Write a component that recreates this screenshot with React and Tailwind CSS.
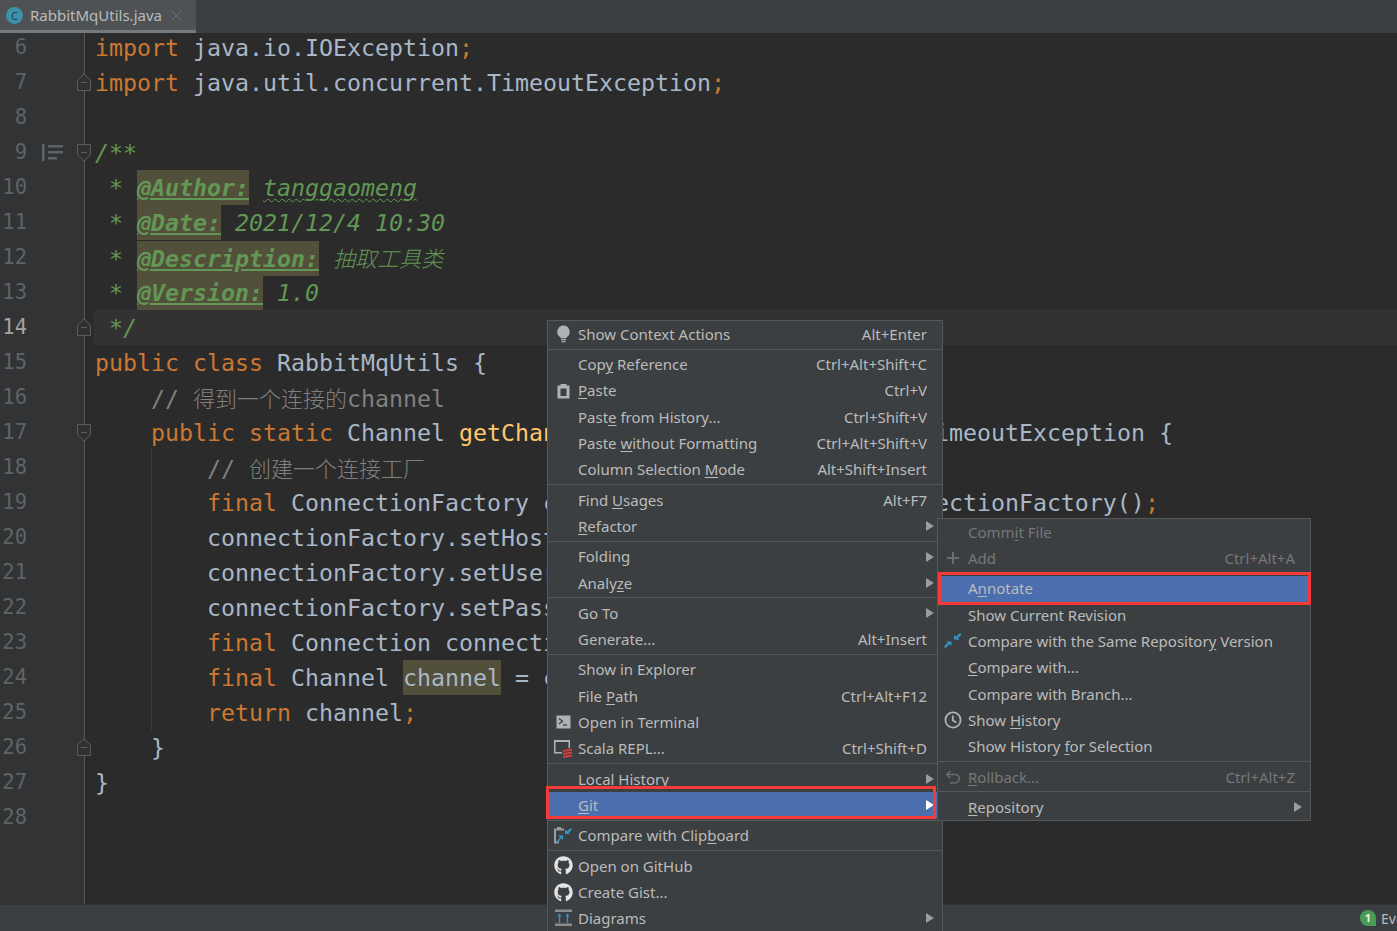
import { FaGithub } from 'react-icons/fa';

const Kw = ({ children }) => <span className="text-[#cc7832]">{children}</span>;
const Doc = ({ children }) => <span className="text-[#629755] italic">{children}</span>;
const Line = ({ children }) => <span className="text-[#808080]">{children}</span>;
const Cjk = ({ children }) => <span className="text-[22px] font-['Noto_Sans_CJK_SC'] font-light">{children}</span>;
const Tag = ({ children }) => (
  <span className="inline-block h-[35px] bg-[#52503a] font-bold text-[#629755] italic underline underline-offset-2">{children}</span>
);

const codeLines = [
  { n: 6, code: <><Kw>import</Kw> java.io.IOException<Kw>;</Kw></> },
  { n: 7, fold: 'up', code: <><Kw>import</Kw> java.util.concurrent.TimeoutException<Kw>;</Kw></> },
  { n: 8, code: '' },
  { n: 9, fold: 'down', mark: true, code: <Doc>/**</Doc> },
  { n: 10, code: <><Doc> * </Doc><Tag>@Author:</Tag><Doc> </Doc><span className="text-[#629755] italic underline decoration-wavy decoration-1 underline-offset-2">tanggaomeng</span></> },
  { n: 11, code: <><Doc> * </Doc><Tag>@Date:</Tag><Doc> 2021/12/4 10:30</Doc></> },
  { n: 12, code: <><Doc> * </Doc><Tag>@Description:</Tag><Doc> <Cjk>抽取工具类</Cjk></Doc></> },
  { n: 13, code: <><Doc> * </Doc><Tag>@Version:</Tag><Doc> 1.0</Doc></> },
  { n: 14, fold: 'up', current: true, code: <Doc> */</Doc> },
  { n: 15, code: <><Kw>public class</Kw> RabbitMqUtils {'{'}</> },
  { n: 16, code: <Line>{'    // '}<Cjk>得到一个连接的</Cjk>channel</Line> },
  { n: 17, fold: 'down', code: <>{'    '}<Kw>public static</Kw> Channel <span className="text-[#ffc66d]">getChannel</span>() <Kw>throws</Kw> IOException<Kw>,</Kw> TimeoutException {'{'}</> },
  { n: 18, code: <Line>{'        // '}<Cjk>创建一个连接工厂</Cjk></Line> },
  { n: 19, code: <>{'        '}<Kw>final</Kw> ConnectionFactory connectionFactory = <Kw>new</Kw> ConnectionFactory()<Kw>;</Kw></> },
  { n: 20, code: '        connectionFactory.setHost();' },
  { n: 21, code: '        connectionFactory.setUsername();' },
  { n: 22, code: '        connectionFactory.setPassword();' },
  { n: 23, code: <>{'        '}<Kw>final</Kw> Connection connection = connectionFactory.newConnection()<Kw>;</Kw></> },
  { n: 24, code: <>{'        '}<Kw>final</Kw> Channel <span className="inline-block h-[35px] bg-[#52503a]">channel</span> = connection.createChannel()<Kw>;</Kw></> },
  { n: 25, code: <>{'        '}<Kw>return</Kw> channel<Kw>;</Kw></> },
  { n: 26, fold: 'up', code: '    }' },
  { n: 27, code: '}' },
  { n: 28, code: '' },
];

function FoldMark({ dir }) {
  return (
    <svg width="16" height="19" viewBox="0 0 16 19" fill="#2f3133" stroke="#5a5d5f" className="absolute left-[76px] top-[8px]">
      {dir === 'up'
        ? <path d="M1.5 17.5V7L8 1l6.5 6v10.5z" />
        : <path d="M1.5 1.5v10.5L8 18l6.5-6V1.5z" />}
      <path d="M5 9.5h6" />
    </svg>
  );
}

const BulbIcon = () => (
  <svg width="15" height="18" viewBox="0 0 15 18" fill="#afb1b3">
    <path d="M7.5 0.5a6.3 6.3 0 0 0-3.6 11.4c.5.4.8.9.8 1.4h5.6c0-.5.3-1 .8-1.4A6.3 6.3 0 0 0 7.5.5z" />
    <path d="M5 14h5v1.2H5zM5.6 16h3.8v1.2H5.6z" />
  </svg>
);
const ClipIcon = () => (
  <svg width="15" height="16" viewBox="0 0 15 16">
    <path d="M1.5 2.5h12v13h-12z" fill="#afb1b3" />
    <path d="M4.5 5.5h6v7.5h-6z" fill="#3c3f41" />
    <path d="M4.5 1h6v3h-6z" fill="#afb1b3" />
  </svg>
);
const ArrowsIcon = () => (
  <svg width="20" height="18" viewBox="0 0 20 18" fill="#3592c4">
    <path d="M11 7.5V3l2 1.8L17 1l1.6 1.6-3.9 3.8 1.8 1.7z" />
    <path d="M8.5 9.5V14l-2-1.8L2.6 16 1 14.4l3.8-3.8L3 9.5z" />
  </svg>
);
const TerminalIcon = () => (
  <svg width="15" height="14" viewBox="0 0 15 14">
    <path d="M0.5 0.5h14v13H.5z" fill="#afb1b3" />
    <path d="M3 3.5l3.5 2.8L3 9" fill="none" stroke="#3c3f41" strokeWidth="1.3" />
    <path d="M7 10h4" stroke="#3c3f41" strokeWidth="1.3" />
  </svg>
);
const ScalaIcon = () => (
  <svg width="20" height="19" viewBox="0 0 20 19">
    <path d="M1 1h16v2H1zM1 3h1.5v11H1zM1 13h8v1.5H1zM15.500 3H17v6h-1.500z" fill="#afb1b3" />
    <path d="M10 11l9-1.500v2L10 13zM10 14l9-1.500v2L10 16zM10 17l9-1.500v2L10 19z" fill="#db3a3a" />
  </svg>
);
const CompareClipIcon = () => (
  <svg width="20" height="18" viewBox="0 0 20 18">
    <path d="M1 2.500h10v2H3v11h3v2H1zM4 1h4v2.500H4z" fill="#9a9c9e" />
    <path d="M12 8V3.500l2 1.800L17.500 2 19 3.500l-3.500 3.600 1.800 1z" fill="#3592c4" />
    <path d="M10 9.500V14l-2-1.800L5 17l-1.500-1.500 3.500-3.800-1.500-2.200z" fill="#3592c4" />
  </svg>
);
const DiagramIcon = () => (
  <svg width="19" height="18" viewBox="0 0 19 18">
    <path d="M1 0.500h17v2.500H1zM1 14.500h17v2.500H1z" fill="#8a8d8f" />
    <path d="M5.500 5v9M13.500 5v9" stroke="#3592c4" strokeWidth="1.400" />
    <path d="M3.500 7.500l2-3 2 3zM11.500 7.500l2-3 2 3z" fill="#3592c4" />
  </svg>
);
const PlusIcon = () => (
  <svg width="14" height="14" viewBox="0 0 14 14" fill="#6a6c6e"><path d="M6 1h2v5h5v2H8v5H6V8H1V6h5z" /></svg>
);
const ClockIcon = () => (
  <svg width="18" height="18" viewBox="0 0 18 18" fill="none" stroke="#afb1b3" strokeWidth="1.800">
    <circle cx="9" cy="9" r="7.600" />
    <path d="M8.800 4.500V9.500L12.500 11.500" />
  </svg>
);
const RollbackIcon = () => (
  <svg width="16" height="14" viewBox="0 0 16 14" fill="none" stroke="#6a6c6e" strokeWidth="1.700">
    <path d="M5.500 1L1.800 4.500 5.500 8" />
    <path d="M2 4.500h8a4 4 0 0 1 0 8.500H5" />
  </svg>
);
const Octocat = () => <FaGithub size={19} className="text-[#e4e4e4]" />;

const mainMenu = [
  [{ label: 'Show Context Actions', key: 'Alt+Enter', icon: <BulbIcon /> }],
  [
    { label: 'Copy Reference', u: 3, key: 'Ctrl+Alt+Shift+C' },
    { label: 'Paste', u: 0, key: 'Ctrl+V', icon: <ClipIcon /> },
    { label: 'Paste from History...', u: 4, key: 'Ctrl+Shift+V' },
    { label: 'Paste without Formatting', u: 6, key: 'Ctrl+Alt+Shift+V' },
    { label: 'Column Selection Mode', u: 17, key: 'Alt+Shift+Insert' },
  ],
  [
    { label: 'Find Usages', u: 5, key: 'Alt+F7' },
    { label: 'Refactor', u: 0, sub: true },
  ],
  [
    { label: 'Folding', sub: true },
    { label: 'Analyze', u: 5, sub: true },
  ],
  [
    { label: 'Go To', sub: true },
    { label: 'Generate...', key: 'Alt+Insert' },
  ],
  [
    { label: 'Show in Explorer' },
    { label: 'File Path', u: 5, key: 'Ctrl+Alt+F12' },
    { label: 'Open in Terminal', icon: <TerminalIcon /> },
    { label: 'Scala REPL...', key: 'Ctrl+Shift+D', icon: <ScalaIcon /> },
  ],
  [
    { label: 'Local History', sub: true },
    { label: 'Git', u: 0, sub: true, active: true },
  ],
  [{ label: 'Compare with Clipboard', u: 17, icon: <CompareClipIcon /> }],
  [
    { label: 'Open on GitHub', icon: <Octocat /> },
    { label: 'Create Gist...', icon: <Octocat /> },
    { label: 'Diagrams', sub: true, icon: <DiagramIcon /> },
  ],
];

const gitMenu = [
  [
    { label: 'Commit File', u: 4, off: true },
    { label: 'Add', key: 'Ctrl+Alt+A', off: true, icon: <PlusIcon /> },
  ],
  [
    { label: 'Annotate', u: 1, active: true },
    { label: 'Show Current Revision' },
    { label: 'Compare with the Same Repository Version', u: 31, icon: <ArrowsIcon /> },
    { label: 'Compare with...', u: 0 },
    { label: 'Compare with Branch...' },
    { label: 'Show History', u: 5, icon: <ClockIcon /> },
    { label: 'Show History for Selection', u: 13 },
  ],
  [{ label: 'Rollback...', u: 0, key: 'Ctrl+Alt+Z', off: true, icon: <RollbackIcon /> }],
  [{ label: 'Repository', u: 0, sub: true }],
];

function Label({ text, u }) {
  if (u === undefined) return text;
  return (
    <>
      {text.slice(0, u)}
      <span className="underline underline-offset-2">{text[u]}</span>
      {text.slice(u + 1)}
    </>
  );
}

function MenuRow({ item }) {
  return (
    <div className={`flex h-[26.3px] items-center whitespace-nowrap ${item.active ? 'bg-[#4b6eaf]' : ''} ${item.off ? 'text-[#777777]' : 'text-[#bbbbbb]'}`}>
      <div className="flex w-[30px] shrink-0 items-center justify-center">{item.icon}</div>
      <div className="flex-1"><Label text={item.label} u={item.u} /></div>
      {item.key && <div className="pr-[15px]">{item.key}</div>}
      {item.sub && (
        <svg width="8" height="10" viewBox="0 0 8 10" className="mr-[8px]">
          <path d="M0 0l8 5-8 5z" fill={item.active ? '#ffffff' : '#9a9c9e'} />
        </svg>
      )}
    </div>
  );
}

function Menu({ groups, className }) {
  return (
    <div className={`absolute border border-[#555759] bg-[#3c3f41] font-['Noto_Sans'] text-[15px] ${className}`}>
      {groups.map((group, i) => (
        <div key={i}>
          {i > 0 && <div className="my-[1.500px] h-px bg-[#555759]" />}
          {group.map((item) => <MenuRow key={item.label} item={item} />)}
        </div>
      ))}
    </div>
  );
}

export default function App() {
  return (
    <div className="relative flex h-[931px] w-[1397px] flex-col overflow-hidden bg-[#2b2b2b]">
      {/* Tabs */}
      <div className="flex h-[33px] shrink-0 bg-[#3c3f41]">
        <div className="flex h-[33px] w-[196px] items-center border-b-[3px] border-[#747a80] bg-[#4e5254] pl-[6px] font-['Noto_Sans'] text-[15px] text-[#bbbbbb]">
          <div className="flex h-[17px] w-[17px] items-center justify-center rounded-full bg-[#3a93ad] text-[11px] leading-none text-[#2b3a40]">C</div>
          <span className="ml-[7px]">RabbitMqUtils.java</span>
          <svg width="11" height="11" viewBox="0 0 11 11" stroke="#6f7274" className="ml-[9px]">
            <path d="M1 1l9 9M10 1l-9 9" />
          </svg>
        </div>
      </div>

      {/* Editor */}
      <div className="relative flex min-h-0 flex-1 overflow-hidden font-['DejaVu_Sans_Mono'] text-[23.26px] leading-[35px]">
        <div className="w-[85px] shrink-0 border-r border-[#555759] bg-[#313335]">
          <div className="-mt-[3px]">
            {codeLines.map((l) => (
              <div key={l.n} className="relative flex h-[35px] items-center">
                <div className={`w-[27px] text-right text-[20.5px] ${l.current ? 'text-[#a4a3a3]' : 'text-[#606366]'}`}>{l.n}</div>
                {l.mark && (
                  <svg width="21" height="17" viewBox="0 0 21 17" fill="#606366" className="ml-[15px]">
                    <path d="M0 0h2.500v17H0zM6 1h15v2.500H6zM6 7h15v2.500H6zM6 13h9v2.500H6z" />
                  </svg>
                )}
                {l.fold && <FoldMark dir={l.fold} />}
              </div>
            ))}
          </div>
        </div>
        <div className="min-w-0 flex-1">
          <div className="-mt-[3px]">
            {codeLines.map((l) => (
              <div key={l.n} className={`ml-[9px] h-[35px] whitespace-pre pl-px text-[#a9b7c6] ${l.current ? 'bg-[#323232]' : ''}`}>
                {l.code}
              </div>
            ))}
          </div>
        </div>
        <div className="absolute left-[151px] top-[415px] h-[282px] w-px bg-[#3b3d3f]" />
      </div>

      {/* Status bar */}
      <div className="flex h-[27px] shrink-0 items-center justify-end border-t border-[#323232] bg-[#3c3f41] font-['Noto_Sans'] text-[14px] text-[#bbbbbb]">
        <div className="flex w-[37px] shrink-0 items-center overflow-hidden">
          <div className="flex h-[16px] w-[16px] shrink-0 items-center justify-center rounded-full rounded-br-none bg-[#499c54] text-[11px] font-bold text-[#eeeeee]">1</div>
          <span className="ml-[5px] whitespace-nowrap">Event Log</span>
        </div>
      </div>

      <Menu groups={mainMenu} className="left-[547px] top-[320px] w-[396px]" />
      <Menu groups={gitMenu} className="left-[937px] top-[518px] w-[374px]" />

      {/* Red annotation boxes */}
      <div className="absolute left-[546px] top-[786px] h-[33px] w-[390px] border-[3px] border-[#f53a3a]" />
      <div className="absolute left-[938px] top-[572px] h-[33px] w-[373px] border-[3px] border-[#f53a3a]" />
    </div>
  );
}
